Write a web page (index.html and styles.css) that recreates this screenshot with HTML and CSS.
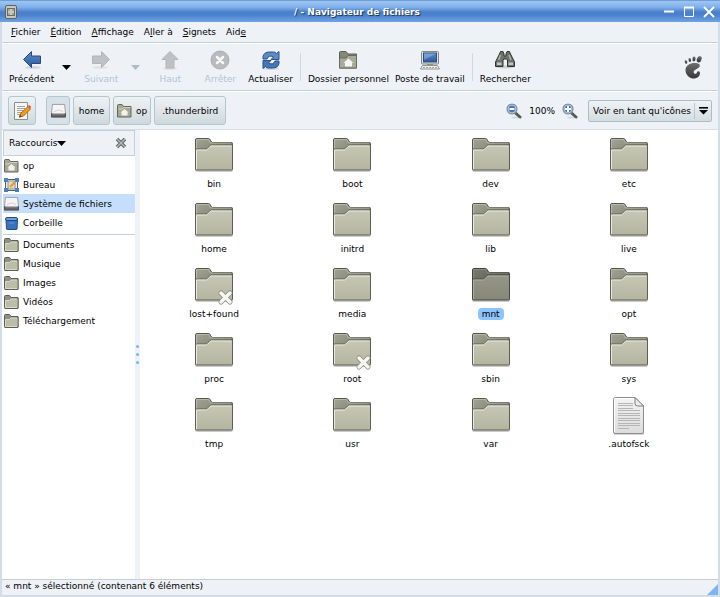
FILE: index.html
```html
<!DOCTYPE html>
<html lang="fr">
<head>
  <meta charset="UTF-8">
  <meta name="viewport" content="width=device-width, initial-scale=1.0">
  <title>/ - Navigateur de fichiers</title>
  <link rel="stylesheet" href="styles.css">
</head>
<body>
  <!-- shared icons -->
  <svg class="defs" width="0" height="0" aria-hidden="true">
    <defs>
      <linearGradient id="g_front" x1="0" y1="0" x2="0" y2="1">
        <stop offset="0" stop-color="#c6c8b5"/>
        <stop offset="1" stop-color="#b3b59f"/>
      </linearGradient>
      <linearGradient id="g_back" x1="0" y1="0" x2="1" y2="1">
        <stop offset="0" stop-color="#a3a593"/>
        <stop offset="1" stop-color="#66685a"/>
      </linearGradient>
      <linearGradient id="g_paper" x1="0" y1="0" x2="0" y2="1">
        <stop offset="0" stop-color="#f4f4f4"/>
        <stop offset="1" stop-color="#dcdcdc"/>
      </linearGradient>
      <linearGradient id="g_blue" x1="0" y1="0" x2="0" y2="1">
        <stop offset="0" stop-color="#5c8cc8"/>
        <stop offset="1" stop-color="#2a5a9c"/>
      </linearGradient>
      <linearGradient id="g_foot" x1="0" y1="0" x2="0" y2="1">
        <stop offset="0" stop-color="#6c6c6c"/>
        <stop offset="1" stop-color="#383838"/>
      </linearGradient>
      <symbol id="folder" viewBox="0 0 40 36">
        <rect x="1" y="31" width="38" height="4" rx="2" fill="#000" opacity=".2"/>
        <path d="M1.500 30V3q0-1.500 1.500-1.500h11.500q1 0 1.500 1l1.500 2.500q.5.500 1.500.5h18.500q1 0 1 1V30z" fill="url(#g_back)" stroke="#55574d"/>
        <path d="M2.500 12V2.500h12l2 3.500h20.500" fill="none" stroke="#c2c4b6" opacity=".7"/>
        <path d="M1.500 32V13q0-1 1-1H12q1 0 1.700-.8l2-2.400q.7-.8 1.700-.8h20.100q1 0 1 1v23q0 1-1 1h-35q-1 0-1-1z" fill="url(#g_front)" stroke="#5d5f55"/>
        <path d="M2.500 32V13H12.500l4.500-4h20.500" fill="none" stroke="#e8e9df"/>
      </symbol>
      <symbol id="folder_small" viewBox="0 0 15 14">
        <path d="M.5 12.500V1.500q0-1 1-1h4l1.500 2h7v10.500h-13z" fill="#8f9182" stroke="#5c5e53"/>
        <path d="M1.500 12.500V5.500h4l1.500-1.500h6.500v8.500z" fill="#bbbda7" stroke="#d9dacb"/>
        <path d="M.5 13.500h13.500V3" fill="none" stroke="#5c5e53"/>
      </symbol>
      <symbol id="home_small" viewBox="0 0 15 14">
        <path d="M.5 13V1.500q0-1 1-1h3.500l1.500 2h7.500v10.500z" fill="#a6a895" stroke="#64665a"/>
        <path d="M1.500 5h3.500l1.500-1.500h7" fill="none" stroke="#d2d3c4"/>
        <path d="M7.500 5l4 3.500h-1v3h-6v-3h-1z" fill="#f3f3ec"/>
      </symbol>
      <symbol id="drive" viewBox="0 0 16 16">
        <path d="M1.500 1.500h13l1 9.500v3.500H.5V11z" fill="#f5f5f5" stroke="#9b9b9b"/>
        <path d="M.5 11.500h15V15h-15z" fill="#666" stroke="#4a4a4a"/>
        <path d="M1.500 11.500h13" stroke="#d3d3d3"/>
        <path d="M3 9.500q5-4 10 0" fill="none" stroke="#d0d0d0"/>
      </symbol>
      <symbol id="doc" viewBox="0 0 34 40">
        <path d="M2 1.500h21l9 9V38H2z" fill="#000" opacity=".15" transform="translate(0 1)"/>
        <path d="M3.500 1.500H23l8.500 8.500v26q0 1.500-1.500 1.500H3q-1.500 0-1.500-1.500V3.500q0-2 2-2z" fill="url(#g_paper)" stroke="#8c8c8c"/>
        <path d="M2.500 36V3.500q0-1 1-1H22.500" fill="none" stroke="#fff"/>
        <path d="M23 1.500v6q0 2.500 2.500 2.500h6z" fill="#e9efe9" stroke="#7e7e7e"/>
        <path d="M6 7.500h15M6 9.500h15M6 12.500h15M6 14.500h22M6 17.500h22M6 19.500h22M6 22.500h22M6 24.500h22M6 27.500h22M6 29.500h22M6 32.500h11" stroke="#b5b5b5"/>
      </symbol>
      <symbol id="locked" viewBox="0 0 17 17">
        <path d="M4 4l9 9M13 4l-9 9" stroke="#8c8d85" stroke-width="5" stroke-linecap="round"/>
        <path d="M4 4l9 9M13 4l-9 9" stroke="#f6f6f3" stroke-width="3.500" stroke-linecap="round"/>
      </symbol>
      <symbol id="lens" viewBox="0 0 16 16">
        <ellipse cx="10" cy="14.500" rx="5" ry="1" fill="#000" opacity=".1"/>
        <path d="M9.500 10l4.500 4" stroke="#555b57" stroke-width="3" stroke-linecap="round"/>
        <circle cx="6" cy="6" r="5" fill="#3f76bd" stroke="#8e9391" stroke-width="1.200"/>
        <circle cx="6" cy="6" r="3.900" fill="none" stroke="#b7d0ee"/>
      </symbol>
    </defs>
  </svg>

  <div class="window">
    <header class="titlebar">
      <svg class="title_icon" width="12" height="14" viewBox="0 0 12 14">
        <rect x=".5" y=".5" width="11" height="13" rx="1.500" fill="#c9c9bf" stroke="#5f6259"/>
        <rect x="2.500" y="3.500" width="7" height="7" fill="#a5a79a" stroke="#6b6d63"/>
        <path d="M3 7h6M5 5h2M5 9h2" stroke="#eeeee6"/>
      </svg>
      <h1>/ - Navigateur de fichiers</h1>
      <div class="win_btns">
        <button aria-label="Réduire"><svg width="12" height="12" viewBox="0 0 12 12"><path d="M1 5.500h10" stroke="#fff" stroke-width="2"/></svg></button>
        <button aria-label="Agrandir"><svg width="12" height="12" viewBox="0 0 12 12"><path d="M1.500 1.500h9v9h-9z" fill="none" stroke="#fff"/><path d="M1 1.500h10" stroke="#fff" stroke-width="2"/></svg></button>
        <button aria-label="Fermer"><svg width="12" height="12" viewBox="0 0 12 12"><path d="M1 1l10 10M11 1L1 11" stroke="#fff" stroke-width="1.800"/></svg></button>
      </div>
    </header>

    <nav class="menubar">
      <button><u>F</u>ichier</button>
      <button><u>É</u>dition</button>
      <button><u>A</u>ffichage</button>
      <button>A<u>l</u>ler à</button>
      <button><u>S</u>ignets</button>
      <button>Aid<u>e</u></button>
    </nav>

    <div class="toolbar">
      <button class="tool">
        <svg width="20" height="20" viewBox="0 0 20 20"><ellipse cx="11" cy="17.500" rx="8" ry="1.500" fill="#000" opacity=".12"/><path d="M1.500 9.500l8-8v4.500h9v7.500h-9v4z" fill="url(#g_blue)" stroke="#274a7e"/></svg>
        Précédent
      </button>
      <button class="arrow" aria-label="Historique précédent"><svg width="9" height="5" viewBox="0 0 9 5"><path d="M0 0h9L4.500 5z" fill="#000"/></svg></button>
      <button class="tool" disabled>
        <svg width="20" height="20" viewBox="0 0 20 20"><ellipse cx="9" cy="17.500" rx="8" ry="1.500" fill="#000" opacity=".06"/><path d="M18.500 9.500l-8-8v4.500h-9v7.500h9v4z" fill="#bfc2c4" stroke="#b2b5b7"/></svg>
        Suivant
      </button>
      <button class="arrow" disabled aria-label="Historique suivant"><svg width="9" height="5" viewBox="0 0 9 5"><path d="M0 0h9L4.500 5z" fill="#a9bfc6"/></svg></button>
      <button class="tool" disabled>
        <svg width="20" height="20" viewBox="0 0 20 20"><ellipse cx="10" cy="18.500" rx="7" ry="1.500" fill="#000" opacity=".08"/><path d="M10 1.500l8 8h-4v8.500H6V9.500H2z" fill="#bfc2c4" stroke="#b2b5b7"/></svg>
        Haut
      </button>
      <button class="tool" disabled>
        <svg width="20" height="20" viewBox="0 0 20 20"><circle cx="10" cy="10" r="9" fill="#b9bbbc" stroke="#acaeb0"/><path d="M7 7l6 6M13 7l-6 6" stroke="#f5f7f9" stroke-width="2.500" stroke-linecap="round"/></svg>
        Arrêter
      </button>
      <button class="tool">
        <svg width="20" height="20" viewBox="0 0 20 20"><ellipse cx="10" cy="18.500" rx="8" ry="1.500" fill="#000" opacity=".12"/><path d="M2 9V6.500Q3 2 8.500 2h4q2 0 3 1.500l2.500-2v8h-8l2.500-2.500Q7.500 4.500 6 9z" fill="#5c8bc4" stroke="#27508c"/><path d="M18 11v2.500q-1 4.500-6.500 4.500h-4q-2 0-3-1.500L2 18.500V10.500h8L7.500 13q5 2.500 6.500-2z" fill="#4577b4" stroke="#27508c"/></svg>
        Actualiser
      </button>
      <span class="sep"></span>
      <button class="tool">
        <svg width="20" height="20" viewBox="0 0 20 20"><path d="M1.500 18V2.500q0-1 1-1H8l2 2.500h8.500v14z" fill="#86887a" stroke="#5c5e53"/><path d="M1.500 18V8H8l2-2.500h8.500V18z" fill="#a9ab9a" stroke="#696b5f"/><path d="M10.500 8.500l5 4.500h-1.500v3.500H7V13H5.500z" fill="#f6f6f0"/></svg>
        Dossier personnel
      </button>
      <button class="tool">
        <svg width="20" height="20" viewBox="0 0 20 20"><rect x="1.500" y="1.500" width="17" height="12.500" rx="1" fill="#e4e4e0" stroke="#83857e"/><rect x="3.500" y="3" width="13" height="9" fill="url(#g_blue)" stroke="#244c84"/><path d="M4 3.500h12L4 10z" fill="#fff" opacity=".25"/><path d="M7 14h6v2H7z" fill="#8d8f89"/><path d="M2.500 15.500h15l2 3.500H.5z" fill="#efefec" stroke="#92948d"/><path d="M3 17.500h14" stroke="#a5a7a0" stroke-dasharray="2 1"/></svg>
        Poste de travail
      </button>
      <span class="sep"></span>
      <button class="tool">
        <svg width="20" height="20" viewBox="0 0 20 20"><ellipse cx="10" cy="17" rx="9" ry="1.500" fill="#000" opacity=".15"/><path d="M4.500 4l1-2.500h2.500L9 4v2h2V4l1-2.500h2.500l1 2.500 4 8v4.500h-7V10l-1-1H9l-1 1v6.500H.5V12z" fill="#6f736d" stroke="#30332f"/><path d="M2 12.500h4.500v2.500H2zM13.500 12.500H18v2.500h-4.500z" fill="#c3c6c0"/><path d="M5.500 5l-2 5M14 5l2 5" stroke="#aeb2ab" stroke-width="1.500"/></svg>
        Rechercher
      </button>
      <svg class="foot" width="18" height="23" viewBox="0 0 18 23">
        <g fill="url(#g_foot)">
          <ellipse cx="15.200" cy="3.300" rx="2.300" ry="3.200" transform="rotate(22 15.200 3.300)"/>
          <ellipse cx="10" cy="3" rx="1.600" ry="2.400" transform="rotate(4 10 3)"/>
          <ellipse cx="5.800" cy="4" rx="1.300" ry="2" transform="rotate(-12 5.800 4)"/>
          <ellipse cx="2" cy="6" rx="1.200" ry="1.800" transform="rotate(-22 2 6)"/>
          <path d="M15.500 8.500C12 5.500 1.500 7 1.500 14c0 5.500 4.500 8.800 8.800 8.600 4-.2 6.200-3.600 5.600-6.300-.4-1.600-2.700-1.500-3 .2-.4 2-3.400 1.700-3.200-.7.300-3 7.800-3.500 5.800-7.300z"/>
        </g>
      </svg>
    </div>

    <div class="location">
      <button class="path edit" aria-label="Modifier le chemin">
        <svg width="20" height="20" viewBox="0 0 20 20"><path d="M2.500 1.500h13v17h-13z" fill="#f5f5f4" stroke="#8c8e8a"/><path d="M5 5.500h8M5 7.500h8M5 9.500h6M5 11.500h5M5 13.500h5" stroke="#a3a5a1"/><path d="M7.500 16l1.500-4 7-6.500 2.500 2.500-7 7z" fill="#f59a1e" stroke="#b5650b"/><path d="M7 16.500l1-2.500 1.500 1.500z" fill="#333"/><path d="M16 5l1-1q2 .5 2 2.500l-1 1z" fill="#d9534a"/></svg>
      </button>
      <button class="path current" aria-label="Système de fichiers"><svg width="15" height="15"><use href="#drive"/></svg></button>
      <button class="path">home</button>
      <button class="path"><svg width="15" height="14"><use href="#home_small"/></svg>op</button>
      <button class="path wide">.thunderbird</button>
      <div class="zoom">
        <button aria-label="Zoom arrière"><svg width="16" height="16" viewBox="0 0 16 16"><use href="#lens"/><path d="M3.500 6h5" stroke="#fff" stroke-width="2"/></svg></button>
        <span>100%</span>
        <button aria-label="Zoom avant"><svg width="16" height="16" viewBox="0 0 16 16"><use href="#lens"/><path d="M3 6h6M6 3v6" stroke="#fff" stroke-width="2"/></svg></button>
      </div>
      <div class="view">
        <select aria-label="Affichage">
          <option>Voir en tant qu'icônes</option>
        </select>
        <svg width="9" height="8" viewBox="0 0 9 8"><path d="M0 .8h9" stroke="#000" stroke-width="1.600"/><path d="M0 3h9L4.500 7.500z"/></svg>
      </div>
    </div>

    <main class="content">
      <aside class="sidebar">
        <div class="side_head">
          <button>Raccourcis<svg width="9" height="5" viewBox="0 0 9 5"><path d="M0 0h9L4.500 5z"/></svg></button>
          <button aria-label="Fermer le panneau"><svg width="12" height="12" viewBox="0 0 12 12"><path d="M2 2l8 8M10 2l-8 8" stroke="#5d6260" stroke-width="3.500"/><path d="M2 2l8 8M10 2l-8 8" stroke="#b4b9b8" stroke-width="1.500"/></svg></button>
        </div>
        <ul class="places">
          <li><button><svg width="15" height="14"><use href="#home_small"/></svg>op</button></li>
          <li><button><svg width="15" height="14" viewBox="0 0 15 14"><rect x="1.500" y="1.500" width="12" height="11" fill="#f1f1ec" stroke="#555b58"/><path d="M0 0h4v4H0zM11 0h4v4h-4zM0 10h4v4H0zM11 10h4v4h-4z" fill="#4b7fc4"/><rect x="4" y="3" width="7" height="8" fill="#dcdcd4" stroke="#8c8e88"/><path d="M6 9l5-5" stroke="#f0981f" stroke-width="2"/></svg>Bureau</button></li>
          <li><button class="on"><svg width="15" height="14" viewBox="0 0 15 14"><use href="#drive" width="15" height="15" y="-1"/></svg>Système de fichiers</button></li>
          <li><button><svg width="15" height="14" viewBox="0 0 15 14"><path d="M2 3h11.500l-.5 10q0 .5-1 .5H3.500q-1 0-1-.5z" fill="#3a72bb" stroke="#1f4a86"/><rect x="1.500" y="1.500" width="12" height="3" rx="1.500" fill="#6fa0dc" stroke="#1f4a86"/><path d="M5 7h5" stroke="#6796d3"/></svg>Corbeille</button></li>
        </ul>
        <ul class="places">
          <li><button><svg width="15" height="14"><use href="#folder_small"/></svg>Documents</button></li>
          <li><button><svg width="15" height="14"><use href="#folder_small"/></svg>Musique</button></li>
          <li><button><svg width="15" height="14"><use href="#folder_small"/></svg>Images</button></li>
          <li><button><svg width="15" height="14"><use href="#folder_small"/></svg>Vidéos</button></li>
          <li><button><svg width="15" height="14"><use href="#folder_small"/></svg>Téléchargement</button></li>
        </ul>
      </aside>
      <div class="splitter"><i></i><i></i><i></i></div>
      <section class="files">
        <button class="file"><svg width="40" height="36"><use href="#folder"/></svg><span>bin</span></button>
        <button class="file"><svg width="40" height="36"><use href="#folder"/></svg><span>boot</span></button>
        <button class="file"><svg width="40" height="36"><use href="#folder"/></svg><span>dev</span></button>
        <button class="file"><svg width="40" height="36"><use href="#folder"/></svg><span>etc</span></button>
        <button class="file"><svg width="40" height="36"><use href="#folder"/></svg><span>home</span></button>
        <button class="file"><svg width="40" height="36"><use href="#folder"/></svg><span>initrd</span></button>
        <button class="file"><svg width="40" height="36"><use href="#folder"/></svg><span>lib</span></button>
        <button class="file"><svg width="40" height="36"><use href="#folder"/></svg><span>live</span></button>
        <button class="file"><svg width="40" height="36"><use href="#folder"/><use href="#locked" x="23" y="22" width="17" height="17"/></svg><span>lost+found</span></button>
        <button class="file"><svg width="40" height="36"><use href="#folder"/></svg><span>media</span></button>
        <button class="file selected"><svg width="40" height="36"><use href="#folder"/></svg><span>mnt</span></button>
        <button class="file"><svg width="40" height="36"><use href="#folder"/></svg><span>opt</span></button>
        <button class="file"><svg width="40" height="36"><use href="#folder"/></svg><span>proc</span></button>
        <button class="file"><svg width="40" height="36"><use href="#folder"/><use href="#locked" x="23" y="22" width="17" height="17"/></svg><span>root</span></button>
        <button class="file"><svg width="40" height="36"><use href="#folder"/></svg><span>sbin</span></button>
        <button class="file"><svg width="40" height="36"><use href="#folder"/></svg><span>sys</span></button>
        <button class="file"><svg width="40" height="36"><use href="#folder"/></svg><span>tmp</span></button>
        <button class="file"><svg width="40" height="36"><use href="#folder"/></svg><span>usr</span></button>
        <button class="file"><svg width="40" height="36"><use href="#folder"/></svg><span>var</span></button>
        <button class="file"><svg width="40" height="36" viewBox="-3 0 40 36"><use href="#doc" x="0" y="-1" width="34" height="40"/></svg><span>.autofsck</span></button>
      </section>
    </main>

    <footer class="status">
      <span>« mnt » sélectionné (contenant 6 éléments)</span>
      <svg width="11" height="11" viewBox="0 0 11 11"><path d="M11 0v11H0z" fill="#7ab5f5"/></svg>
    </footer>
  </div>
</body>
</html>
```
FILE: styles.css
```css
*{
  margin: 0;
  padding: 0;
  box-sizing: border-box;
}
body{
  font-family: "DejaVu Sans", sans-serif;
  font-size: 9px;
  line-height: 12px;
  color: #000;
}
button,select{
  font: inherit;
  color: inherit;
  background: none;
  border: 0;
  outline: none;
  white-space: nowrap;
}
svg{
  display: block;
  flex: none;
  overflow: visible;
}
ul{
  list-style: none;
}
.defs{
  position: absolute;
}
.window{
  display: flex;
  flex-direction: column;
  min-height: 100vh;
  background-color: #eef2f7;
  border: solid #d3dde7;
  border-width: 0 2px 2px;
}

/* title bar */
.titlebar{
  display: grid;
  grid-template-columns: 1fr auto 1fr;
  align-items: center;
  height: 22px;
  margin: 0 -2px;
  padding: 0 5px;
  border-top: 1px solid #6d9cd9;
  background: linear-gradient(#a0c6f2, #7fb0ea 30%, #4a80cc 52%, #4a80cc 65%, #6fa3e4);
}
.titlebar h1{
  margin-right: 6px;
  font-size: 9px;
  color: #fff;
  text-shadow: 1px 1px 1px #1c2f4d;
}
.win_btns{
  display: flex;
  justify-content: flex-end;
  gap: 8px;
}

/* menu */
.menubar{
  display: flex;
  gap: 10px;
  height: 21px;
  padding: 0 9px;
  border-bottom: 1px solid #c5d0d6;
}

/* toolbar */
.toolbar{
  display: flex;
  align-items: center;
  height: 48px;
  padding: 0 16px 0 4px;
  border-top: 1px solid #fff;
  border-bottom: 1px solid #c5d0d6;
}
.tool{
  display: flex;
  flex-direction: column;
  align-items: center;
  gap: 3px;
  min-width: 50px;
  padding: 0 3px;
}
.tool:disabled{
  color: #b2c5cb;
}
.arrow{
  display: flex;
  justify-content: center;
  width: 19px;
}
.sep{
  width: 1px;
  height: 28px;
  margin: 0 4px;
  background-color: #d2d9de;
}
.foot{
  margin-left: auto;
}

/* path bar */
.location{
  display: flex;
  align-items: center;
  gap: 3px;
  height: 39px;
  padding: 0 6px;
  border-top: 1px solid #fff;
  border-bottom: 1px solid #d5dde2;
}
.path{
  display: flex;
  align-items: center;
  justify-content: center;
  gap: 4px;
  height: 29px;
  padding: 0 3px;
  min-width: 24px;
  border: 1px solid #b3c7cf;
  border-radius: 3px;
  background: linear-gradient(#eef2f5, #dfe6e9 50%, #ced9dc);
}
.path:not(.edit):not(.current){
  min-width: 37px;
}
.path.edit{
  margin-right: 7px;
}
.path.current{
  background: #d7e1e7;
}
.path.wide{
  padding: 0 7px;
}
.zoom{
  display: flex;
  align-items: center;
  gap: 7px;
  margin-left: auto;
}
.view{
  position: relative;
  margin-left: 7px;
}
.view select{
  appearance: none;
  height: 22px;
  padding: 0 19px 0 4px;
  border: 1px solid #a9bfc6;
  border-radius: 2px;
  background: linear-gradient(#eff3f6, #d3dddf);
}
.view svg{
  position: absolute;
  top: 7px;
  right: 4px;
  pointer-events: none;
}
.view::after{
  content: "";
  position: absolute;
  top: 3px;
  right: 17px;
  width: 1px;
  height: 16px;
  background-color: #b7c8ce;
}

/* content */
.content{
  display: flex;
  flex: 1;
  padding: 0 1px;
  background-color: #fff;
}
.sidebar{
  width: 132px;
}
.side_head{
  display: flex;
  justify-content: space-between;
  align-items: center;
  height: 26px;
  padding: 0 7px 0 5px;
  border: 1px solid #c3d2d8;
  background-color: #eef2f7;
}
.side_head button{
  display: flex;
  align-items: center;
}
.places + .places{
  margin: 2px 0;
  border-top: 1px solid #c3d2d8;
}
.places button{
  display: flex;
  align-items: center;
  gap: 4px;
  width: 100%;
  height: 19px;
  padding-left: 1px;
}
.places .on{
  background-color: #c4defc;
}
.splitter{
  display: flex;
  flex-direction: column;
  justify-content: center;
  align-items: center;
  gap: 5px;
  width: 5px;
  background-color: #eef2f7;
}
.splitter i{
  width: 3px;
  height: 3px;
  border-radius: 50%;
  background-color: #70b4f8;
}
.files{
  display: grid;
  grid-template-columns: repeat(4, 1fr);
  grid-auto-rows: 65px;
  flex: 1;
  padding: 7px 19px 0 5px;
}
.file{
  display: flex;
  flex-direction: column;
  align-items: center;
  gap: 5px;
}
.file span{
  padding: 0 4px;
  border-radius: 4px;
}
.file.selected svg{
  filter: brightness(.75);
}
.file.selected span{
  background-color: #8cc4fd;
}

/* status */
.status{
  display: flex;
  justify-content: space-between;
  height: 16px;
  padding-left: 3px;
  border-top: 1px solid #c5d0d6;
}
.status svg{
  align-self: flex-end;
}
```
